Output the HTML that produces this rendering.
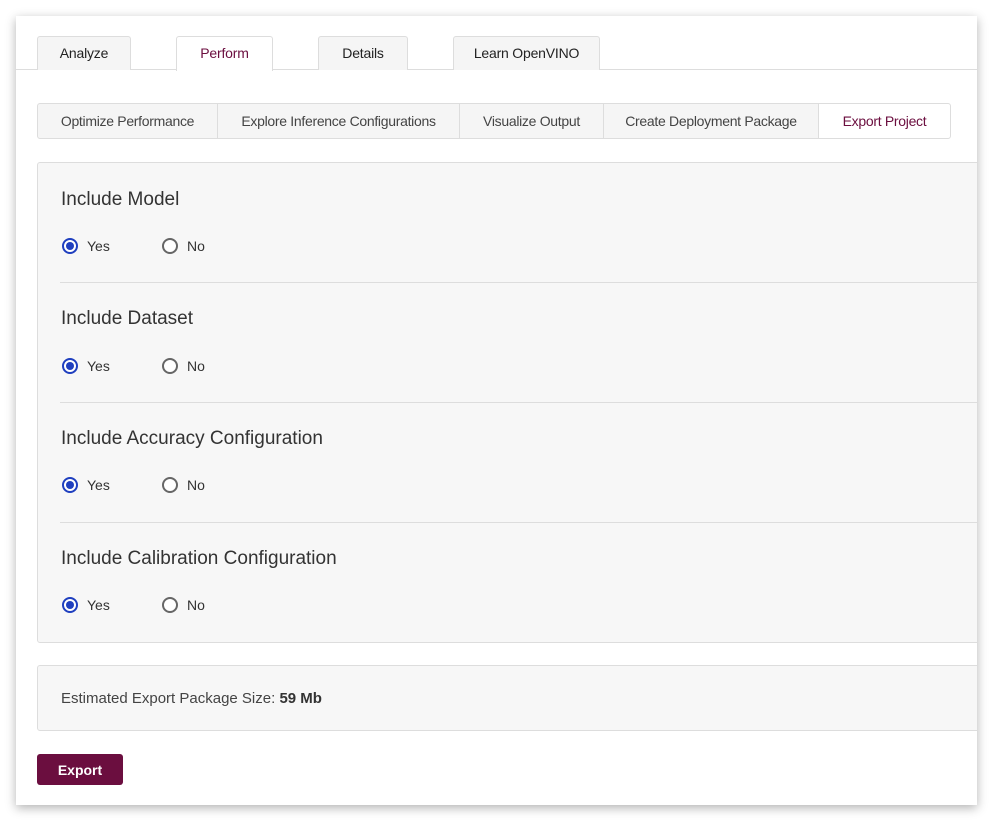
<!DOCTYPE html>
<html><head><style>
*{box-sizing:border-box;margin:0;padding:0}
body{width:1001px;height:829px;background:#fff;font-family:"Liberation Sans",sans-serif;position:relative;overflow:hidden;color:#333}
.card{position:absolute;left:16px;top:16px;width:961px;height:789px;background:#fff;box-shadow:0 3px 10px rgba(0,0,0,.3);overflow:hidden}
.abs{position:absolute}
.tab{position:absolute;top:20px;height:34px;border:1px solid #ddd;border-bottom:none;background:#f5f5f5;border-radius:3px 3px 0 0;font-size:14px;text-align:center;line-height:33px;color:#222;letter-spacing:-0.2px}
.tabline{position:absolute;left:0;top:53px;width:961px;border-top:1px solid #ddd}
.sub{position:absolute;top:87px;height:36px;border:1px solid #ddd;background:#f5f5f5;font-size:14px;color:#444;text-align:center;line-height:34px;letter-spacing:-0.3px}
.panel{position:absolute;left:21px;top:146px;width:960px;height:481px;background:#f7f7f7;border:1px solid #ddd;border-radius:3px}
h3{position:absolute;left:23px;font-size:19px;font-weight:normal;color:#333}
.div{position:absolute;left:22px;width:940px;border-top:1px solid #ddd}
.r{position:absolute;width:16px;height:16px;border-radius:50%;border:2px solid #666;background:#fff}
.r.on{border-color:#1f3fbf}
.r.on::after{content:"";position:absolute;left:2px;top:2px;width:8px;height:8px;border-radius:50%;background:#1f3fbf}
.lbl{position:absolute;font-size:14px;color:#333}
</style></head><body>
<div class="card">
<div class="tabline"></div>
<div class="tab" style="left:21px;width:94px">Analyze</div>
<div class="tab" style="left:160px;width:97px;height:35px;background:#fff;color:#6b0e3f">Perform</div>
<div class="tab" style="left:302px;width:90px">Details</div>
<div class="tab" style="left:437px;width:147px">Learn OpenVINO</div>

<div class="sub" style="left:21px;width:181px;border-radius:3px 0 0 3px">Optimize Performance</div>
<div class="sub" style="left:201px;width:243px">Explore Inference Configurations</div>
<div class="sub" style="left:443px;width:145px">Visualize Output</div>
<div class="sub" style="left:587px;width:216px">Create Deployment Package</div>
<div class="sub" style="left:802px;width:133px;background:#fff;color:#6b0e3f;border-radius:0 3px 3px 0">Export Project</div>

<div class="panel">
<h3 style="top:26px">Include Model</h3>
<div class="r on" style="left:24px;top:75px"></div><div class="lbl" style="left:49px;top:75px">Yes</div>
<div class="r" style="left:124px;top:75px"></div><div class="lbl" style="left:149px;top:75px">No</div>
<div class="div" style="top:119px"></div>
<h3 style="top:145px">Include Dataset</h3>
<div class="r on" style="left:24px;top:195px"></div><div class="lbl" style="left:49px;top:195px">Yes</div>
<div class="r" style="left:124px;top:195px"></div><div class="lbl" style="left:149px;top:195px">No</div>
<div class="div" style="top:239px"></div>
<h3 style="top:265px">Include Accuracy Configuration</h3>
<div class="r on" style="left:24px;top:314px"></div><div class="lbl" style="left:49px;top:314px">Yes</div>
<div class="r" style="left:124px;top:314px"></div><div class="lbl" style="left:149px;top:314px">No</div>
<div class="div" style="top:359px"></div>
<h3 style="top:385px">Include Calibration Configuration</h3>
<div class="r on" style="left:24px;top:434px"></div><div class="lbl" style="left:49px;top:434px">Yes</div>
<div class="r" style="left:124px;top:434px"></div><div class="lbl" style="left:149px;top:434px">No</div>
</div>

<div class="abs" style="left:21px;top:649px;width:960px;height:66px;background:#f7f7f7;border:1px solid #ddd;border-radius:3px">
<div class="abs" style="left:23px;top:24px;font-size:15px;color:#444">Estimated Export Package Size: <b style="color:#333">59 Mb</b></div>
</div>
<div class="abs" style="left:21px;top:738px;width:86px;height:31px;background:#6b0e3f;border-radius:3px;color:#fff;font-size:14px;font-weight:bold;text-align:center;line-height:32px">Export</div>
</div>
</body></html>
